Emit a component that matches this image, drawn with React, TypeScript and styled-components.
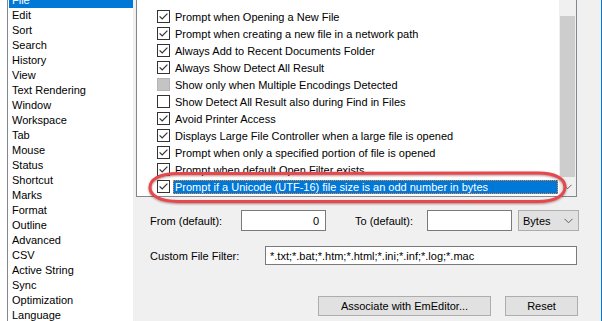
import React from "react";
import styled, { createGlobalStyle } from "styled-components";

const GlobalStyle = createGlobalStyle`
  html, body {
    margin: 0;
    padding: 0;
    background: #f0f0f0;
  }
  body {
    font-family: "Liberation Sans", Arial, sans-serif;
    font-size: 11px;
    color: #000;
  }
`;

const categories = [
  "File", "Edit", "Sort", "Search", "History", "View", "Text Rendering", "Window",
  "Workspace", "Tab", "Mouse", "Status", "Shortcut", "Marks", "Format", "Outline",
  "Advanced", "CSV", "Active String", "Sync", "Optimization", "Language",
];

type CheckState = "on" | "off" | "disabled";

const options: { label: string; state: CheckState }[] = [
  { label: "Prompt when Opening a New File", state: "on" },
  { label: "Prompt when creating a new file in a network path", state: "on" },
  { label: "Always Add to Recent Documents Folder", state: "on" },
  { label: "Always Show Detect All Result", state: "on" },
  { label: "Show only when Multiple Encodings Detected", state: "disabled" },
  { label: "Show Detect All Result also during Find in Files", state: "off" },
  { label: "Avoid Printer Access", state: "on" },
  { label: "Displays Large File Controller when a large file is opened", state: "on" },
  { label: "Prompt when only a specified portion of file is opened", state: "on" },
  { label: "Prompt when default Open Filter exists", state: "on" },
  { label: "Prompt if a Unicode (UTF-16) file size is an odd number in bytes", state: "on" },
];

const Window = styled.div`
  position: relative;
  display: flex;
  width: 602px;
  height: 321px;
  overflow: hidden;
  box-sizing: border-box;
  border-right: 1px solid #0078d7;
  background: #f0f0f0;
`;

const Sidebar = styled.div`
  width: 133px;
  flex: none;
  background: #fff;
  padding-left: 7px;
  box-sizing: border-box;
`;

const CategoryList = styled.ul`
  list-style: none;
  margin: 0;
  height: 100%;
  padding: 0 0 0 1px;
  border-left: 1px solid #828790;
  overflow: hidden;
`;

const CategoryItem = styled.li<{ $selected?: boolean }>`
  height: 15px;
  line-height: 15px;
  padding-left: 3px;
  white-space: nowrap;
  background: ${p => (p.$selected ? "#0078d7" : "transparent")};
  color: ${p => (p.$selected ? "#fff" : "#000")};
  &:first-child {
    margin-top: -7px;
  }
`;

const Page = styled.div`
  flex: 1;
  display: flex;
  flex-direction: column;
  padding-left: 3px;
`;

const CheckList = styled.div`
  display: flex;
  width: 441px;
  height: 198px;
  margin-top: -1px;
  box-sizing: border-box;
  border: 1px solid #828790;
  background: #fff;
`;

const CheckRows = styled.div`
  flex: 1;
  padding-top: 8px;
  overflow: hidden;
`;

const CheckRow = styled.div`
  display: flex;
  align-items: center;
  height: 17px;
  padding-left: 20px;
  padding-right: 1px;
`;

const Box = styled.span<{ $state: CheckState }>`
  flex: none;
  display: flex;
  align-items: center;
  justify-content: center;
  width: 13px;
  height: 13px;
  box-sizing: border-box;
  border: 1px solid ${p => (p.$state === "disabled" ? "#b4b4b4" : "#333")};
  background: ${p => (p.$state === "disabled" ? "#c4c4c4" : "#fff")};
`;

const RowLabel = styled.span<{ $focused?: boolean }>`
  flex: ${p => (p.$focused ? 1 : "none")};
  height: 14px;
  line-height: 14px;
  margin-left: 3px;
  padding: 0 2px;
  white-space: nowrap;
  background: ${p => (p.$focused ? "#0078d7" : "transparent")};
  color: ${p => (p.$focused ? "#fff" : "#000")};
  outline: ${p => (p.$focused ? "1px dotted #ff8728" : "none")};
  outline-offset: -1px;
`;

const ScrollBar = styled.div`
  width: 17px;
  flex: none;
  display: flex;
  flex-direction: column;
  background: #f0f0f0;
`;

const ScrollThumb = styled.div`
  height: 161px;
  margin: 16px 1px 0 1px;
  background: #cdcdcd;
`;

const ScrollButton = styled.div`
  flex: 1;
  display: flex;
  align-items: center;
  justify-content: center;
`;

const Form = styled.div`
  display: flex;
  flex-direction: column;
  padding: 0 29px 0 14px;
`;

const FieldRow = styled.div<{ $top: number }>`
  display: flex;
  align-items: center;
  margin-top: ${p => p.$top}px;
`;

const FieldLabel = styled.span<{ $width: number; $gap?: number }>`
  width: ${p => p.$width}px;
  margin-left: ${p => p.$gap ?? 0}px;
  flex: none;
  white-space: nowrap;
`;

const TextBox = styled.div<{ $width: number; $height: number; $right?: boolean }>`
  width: ${p => p.$width}px;
  height: ${p => p.$height}px;
  flex: none;
  box-sizing: border-box;
  border: 1px solid #7a7a7a;
  background: #fff;
  display: flex;
  align-items: center;
  justify-content: ${p => (p.$right ? "flex-end" : "flex-start")};
  padding: 0 6px 0 4px;
  white-space: nowrap;
`;

const Select = styled.div`
  width: 61px;
  height: 21px;
  margin-left: 6px;
  flex: none;
  box-sizing: border-box;
  border: 1px solid #adadad;
  background: #e1e1e1;
  display: flex;
  align-items: center;
  justify-content: space-between;
  padding: 0 5px 0 4px;
`;

const ButtonRow = styled.div`
  display: flex;
  justify-content: flex-end;
  gap: 14px;
  margin-top: 31px;
  padding-right: 1px;
`;

const Button = styled.div<{ $width: number }>`
  width: ${p => p.$width}px;
  height: 20px;
  box-sizing: border-box;
  border: 1px solid #adadad;
  background: #e1e1e1;
  display: flex;
  align-items: center;
  justify-content: center;
`;

const Annotation = styled.svg`
  position: absolute;
  left: 148px;
  top: 170px;
  overflow: visible;
  pointer-events: none;
  filter: drop-shadow(0 1px 1px rgba(90, 0, 0, 0.45));
`;

const CheckMark = () => (
  <svg width="11" height="11" viewBox="0 0 11 11">
    <path d="M1.6 5.4 L4.2 8 L9.4 2.6" fill="none" stroke="#333" strokeWidth="1.2" />
  </svg>
);

const Chevron = () => (
  <svg width="9" height="6" viewBox="0 0 9 6">
    <path d="M0.5 0.8 L4.5 4.8 L8.5 0.8" fill="none" stroke="#606060" strokeWidth="1" />
  </svg>
);

export default function App() {
  return (
    <>
      <GlobalStyle />
      <Window>
        <Sidebar>
          <CategoryList>
            {categories.map((c, i) => (
              <CategoryItem key={c} $selected={i === 0}>
                {c}
              </CategoryItem>
            ))}
          </CategoryList>
        </Sidebar>
        <Page>
          <CheckList>
            <CheckRows>
              {options.map((o, i) => (
                <CheckRow key={o.label}>
                  <Box $state={o.state}>{o.state === "on" && <CheckMark />}</Box>
                  <RowLabel $focused={i === options.length - 1}>{o.label}</RowLabel>
                </CheckRow>
              ))}
            </CheckRows>
            <ScrollBar>
              <ScrollThumb />
              <ScrollButton>
                <Chevron />
              </ScrollButton>
            </ScrollBar>
          </CheckList>
          <Form>
            <FieldRow $top={13}>
              <FieldLabel $width={91}>From (default):</FieldLabel>
              <TextBox $width={85} $height={21} $right>0</TextBox>
              <FieldLabel $width={72} $gap={29}>To (default):</FieldLabel>
              <TextBox $width={85} $height={21} />
              <Select>
                <span>Bytes</span>
                <Chevron />
              </Select>
            </FieldRow>
            <FieldRow $top={15}>
              <FieldLabel $width={115}>Custom File Filter:</FieldLabel>
              <TextBox $width={312} $height={19}>
                *.txt;*.bat;*.htm;*.html;*.ini;*.inf;*.log;*.mac
              </TextBox>
            </FieldRow>
            <ButtonRow>
              <Button $width={173}>Associate with EmEditor...</Button>
              <Button $width={73}>Reset</Button>
            </ButtonRow>
          </Form>
        </Page>
        <Annotation width="420" height="34" viewBox="0 0 420 34">
          <path
            d="M30 3.5 L390 3 C408 3 417 9 417 17 C417 25 408 31.5 390 31.5 L30 31.5 C11 31.5 2 25 2 17.5 C2 9.5 11 3.5 30 3.5 Z"
            fill="none"
            stroke="#e5484d"
            strokeWidth="3"
          />
        </Annotation>
      </Window>
    </>
  );
}
